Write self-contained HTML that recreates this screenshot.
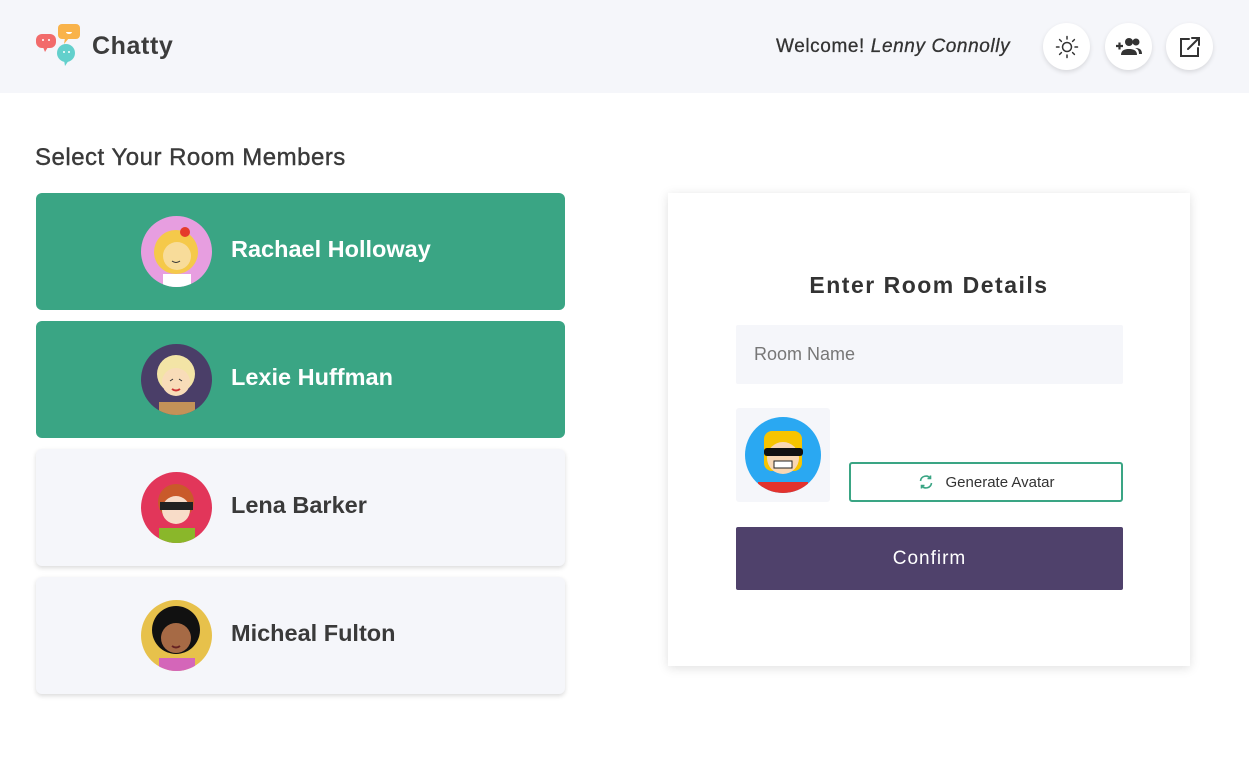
<!DOCTYPE html>
<html><head><meta charset="utf-8"><style>
*{box-sizing:border-box;margin:0;padding:0}
body{width:1249px;height:765px;background:#fff;font-family:"Liberation Sans",sans-serif;color:#3a3a3a;position:relative;overflow:hidden}
.hdr{position:absolute;left:0;top:0;width:1249px;height:93px;background:#f5f6fa}
.logo{position:absolute;left:92px;top:32px;font-size:25px;font-weight:bold;letter-spacing:.6px;color:#3c3c3c}
.wel{position:absolute;left:776px;top:36px;font-size:19px;color:#333;letter-spacing:.6px;-webkit-text-stroke:.3px #333}
.btn{position:absolute;top:23px;width:47px;height:47px;border-radius:50%;background:#fff;box-shadow:0 2px 5px rgba(0,0,0,.12);display:flex;align-items:center;justify-content:center}
h2{position:absolute;left:35px;top:144px;font-size:24px;font-weight:normal;color:#3a3a3a;letter-spacing:.5px;-webkit-text-stroke:.4px #3a3a3a}
.card{position:absolute;left:36px;width:529px;height:117px;border-radius:6px;background:#f5f6fa;box-shadow:0 2px 5px rgba(0,0,0,.15)}
.card.g{background:#3aa584;box-shadow:none}
.card .av{position:absolute;left:105px;top:23px;width:71px;height:71px;border-radius:50%;overflow:hidden}
.card .nm{position:absolute;left:195px;top:43px;font-size:23.5px;font-weight:bold;color:#3a3a3a}
.card.g .nm{color:#fff}
.panel{position:absolute;left:668px;top:193px;width:522px;height:473px;background:#fff;box-shadow:0 2px 10px rgba(0,0,0,.13)}
</style></head><body>
<div class="hdr">
<svg style="position:absolute;left:35px;top:22px" width="48" height="48" viewBox="0 0 48 48">
<rect x="1" y="12" width="20" height="14" rx="6" fill="#f26b6b"/><path d="M8 25l2 5 3-5z" fill="#f26b6b"/>
<rect x="23" y="2" width="22" height="15" rx="4" fill="#f9b34a"/><path d="M30 16l-1 6 5-6z" fill="#f9b34a"/>
<circle cx="31" cy="31" r="9" fill="#63d0cc"/><path d="M29 38l1 6 4-6z" fill="#63d0cc"/>
<circle cx="8" cy="18" r="1" fill="#fff"/><circle cx="14" cy="18" r="1" fill="#fff"/>
<circle cx="29" cy="30" r="1" fill="#fff"/><circle cx="34" cy="30" r="1" fill="#fff"/>
<path d="M31 10a3 2 0 0 0 6 0z" fill="#fff"/></svg>
<div class="logo">Chatty</div>
<div class="wel">Welcome! <i>Lenny Connolly</i></div>
<div class="btn" style="left:1043px"><svg width="24" height="24" viewBox="0 0 24 24" fill="none" stroke="#333" stroke-width="1.5" stroke-linecap="round"><circle cx="12" cy="12" r="4.5"/><path d="M12 1.5v2.5M12 20v2.5M1.5 12h2.5M20 12h2.5M4.6 4.6l1.8 1.8M17.6 17.6l1.8 1.8M4.6 19.4l1.8-1.8M17.6 6.4l1.8-1.8"/></svg></div>
<div class="btn" style="left:1105px"><svg width="28" height="20" viewBox="0 0 28 20" fill="#333"><path d="M1 9h7M4.5 5.5v7" stroke="#333" stroke-width="2.2"/><circle cx="14" cy="5" r="4"/><path d="M6 18c0-5 4-6 8-6s8 1 8 6z"/><circle cx="21" cy="5" r="3.5"/><path d="M20 11c4 0 7 1 7 6h-3c0-3-1-5-4-6z"/></svg></div>
<div class="btn" style="left:1166px"><svg width="24" height="24" viewBox="0 0 24 24" fill="none" stroke="#333" stroke-width="2" stroke-linecap="round"><path d="M11 4H3v17h17v-8"/><path d="M10 14L21 3M14 3h7v7"/></svg></div>
</div>
<h2>Select Your Room Members</h2>
<div class="card g" style="top:193px"><div class="av" style="background:#e79ee0"><svg width="71" height="71"><circle cx="35" cy="36" r="22" fill="#f5c94a"/><circle cx="36" cy="40" r="14" fill="#f8dc9a"/><circle cx="44" cy="16" r="5" fill="#e53b2b"/><rect x="22" y="58" width="28" height="14" fill="#fff"/><path d="M31 45q4 3 8 0" stroke="#333" fill="none"/></svg></div><div class="nm">Rachael Holloway</div></div>
<div class="card g" style="top:321px"><div class="av" style="background:#4a3e68"><svg width="71" height="71"><circle cx="35" cy="30" r="19" fill="#f3e4a6"/><circle cx="35" cy="38" r="14" fill="#f8dcb8"/><rect x="18" y="58" width="36" height="14" fill="#c49258"/><path d="M29 37l3-2M41 37l-3-2" stroke="#333"/><path d="M31 45q4 3 8 0" stroke="#c33" fill="none" stroke-width="2"/></svg></div><div class="nm">Lexie Huffman</div></div>
<div class="card" style="top:449px"><div class="av" style="background:#e2365a"><svg width="71" height="71"><circle cx="35" cy="30" r="18" fill="#c95a2a"/><circle cx="35" cy="38" r="14" fill="#f8dcc8"/><rect x="19" y="30" width="33" height="8" fill="#222"/><rect x="18" y="56" width="36" height="16" fill="#8ab72a"/></svg></div><div class="nm">Lena Barker</div></div>
<div class="card" style="top:577px"><div class="av" style="background:#e7c14b"><svg width="71" height="71"><circle cx="35" cy="30" r="24" fill="#111"/><circle cx="35" cy="38" r="15" fill="#a66a45"/><rect x="18" y="58" width="36" height="14" fill="#d466b9"/><path d="M31 46q4 3 8 0" stroke="#622" fill="none" stroke-width="2"/></svg></div><div class="nm">Micheal Fulton</div></div>
<div class="panel">
<div style="position:absolute;left:0;width:522px;top:79px;text-align:center;font-size:23px;font-weight:bold;letter-spacing:1.5px;color:#333">Enter Room Details</div>
<div style="position:absolute;left:68px;top:132px;width:387px;height:59px;background:#f5f6fa;border-radius:2px;font-size:18px;color:#777;padding:19px 0 0 18px">Room Name</div>
<div style="position:absolute;left:68px;top:215px;width:94px;height:94px;background:#f5f6fa;border-radius:3px"><svg width="94" height="94"><circle cx="47" cy="47" r="38" fill="#2aa8f2"/><clipPath id="c"><circle cx="47" cy="47" r="38"/></clipPath><g clip-path="url(#c)"><rect x="28" y="23" width="38" height="40" rx="8" fill="#f7c400"/><circle cx="47" cy="50" r="16" fill="#f8d7b4"/><rect x="22" y="74" width="50" height="20" fill="#e3322d"/><rect x="28" y="40" width="39" height="8" rx="3" fill="#111"/><rect x="38" y="53" width="18" height="7" fill="#fff" stroke="#222"/></g></svg></div>
<div style="position:absolute;left:181px;top:269px;width:274px;height:40px;border:2px solid #3aa584;border-radius:3px;font-size:15px;color:#333;display:flex;align-items:center;justify-content:center"><svg width="16" height="16" viewBox="0 0 16 16" fill="none" stroke="#3aa584" stroke-width="1.6" style="margin-right:12px"><path d="M2.5 7a5.5 5.5 0 0 1 10-2.5M13.5 9a5.5 5.5 0 0 1-10 2.5M12.5 1.5v3h-3M3.5 14.5v-3h3"/></svg>Generate Avatar</div>
<div style="position:absolute;left:68px;top:334px;width:387px;height:63px;background:#4f416b;border-radius:2px;color:#fff;font-size:19px;letter-spacing:1px;display:flex;align-items:center;justify-content:center">Confirm</div>
</div>
</body></html>
